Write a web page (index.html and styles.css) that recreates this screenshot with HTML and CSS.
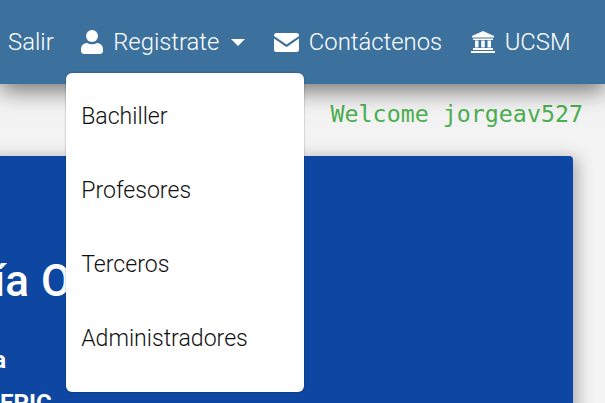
FILE: index.html
```html
<!DOCTYPE html>
<html lang="es">
<head>
    <meta charset="UTF-8">
    <meta name="viewport" content="width=device-width, initial-scale=1.0">
    <title>Secretaría Online</title>
    <link rel="stylesheet" href="styles.css">
</head>
<body>
    <nav class="navbar">
        <a class="nav-link" href="#">Salir</a>
        <div class="nav-item">
            <a class="nav-link" href="#">
                <svg class="icon icon-user" viewBox="0 0 24 26"><circle cx="12" cy="6.5" r="6.5"/><path d="M6.5 14.200c1.700.9 3.500 1.300 5.500 1.300s3.800-.4 5.500-1.300c3.700.2 6.500 3 6.500 6.700v2.300c0 1.500-1.300 2.800-2.800 2.800H2.800C1.300 26 0 24.700 0 23.200v-2.300c0-3.700 2.800-6.500 6.500-6.700z"/></svg>
                Registrate
                <span class="caret"></span>
            </a>
            <ul class="dropdown">
                <li><a href="#">Bachiller</a></li>
                <li><a href="#">Profesores</a></li>
                <li><a href="#">Terceros</a></li>
                <li><a href="#">Administradores</a></li>
            </ul>
        </div>
        <a class="nav-link" href="#">
            <svg class="icon icon-mail" viewBox="0 0 25 19"><path d="M2.300 0h20.400C24 0 25 1 25 2.300v.6l-12.500 8.500L0 2.900v-.6C0 1 1 0 2.300 0z"/><path d="M0 5.500l11.500 7.900c.6.400 1.400.4 2 0L25 5.500v11.200c0 1.300-1 2.300-2.300 2.300H2.300C1 19 0 18 0 16.700z"/></svg>
            Contáctenos
        </a>
        <a class="nav-link" href="#">
            <svg class="icon icon-bank" viewBox="0 0 24 22"><path d="M12 0l11 5v1.500H1V5z"/><path d="M2 7.500h20V9H2zM4 9.500h3.500v7H4zM10.200 9.500h3.600v7h-3.600zM16.500 9.500H20v7h-3.500zM2 17h20v2H2zM0 20h24v2H0z"/></svg>
            UCSM
        </a>
    </nav>

    <main class="content">
        <p class="welcome">Welcome jorgeav527</p>
        <section class="card">
            <h1 class="card-title">Secretaría Online</h1>
            <p class="card-line card-intro">Bienvenida</p>
            <p class="card-line">EPIC</p>
        </section>
    </main>
</body>
</html>
```

FILE: styles.css
```css
html, body {
    height: 100%;
    margin: 0;
    overflow: hidden;
}
body {
    font-family: Roboto, sans-serif;
    background-color: #f3f3f3;
}
.navbar {
    position: relative;
    z-index: 2;
    display: flex;
    align-items: center;
    gap: 28.5px;
    height: 84px;
    padding-left: 8px;
    background-color: #3c719e;
    box-shadow: 0 6px 22px rgba(0, 0, 0, 0.55);
    white-space: nowrap;
}
.nav-item {
    position: relative;
    margin-left: -1px;
}
.nav-link {
    display: flex;
    align-items: center;
    gap: 10px;
    color: white;
    font-size: 23.85px;
    font-weight: 300;
    text-decoration: none;
}
.icon {
    fill: white;
    flex: none;
}
.icon-user {
    width: 22px;
    height: 24px;
}
.icon-mail {
    width: 25px;
    height: 19px;
}
.icon-bank {
    width: 24px;
    height: 22px;
}
.caret {
    width: 0;
    height: 0;
    margin-left: 2px;
    border-top: 7px solid white;
    border-left: 7px solid transparent;
    border-right: 7px solid transparent;
}
.dropdown {
    position: absolute;
    top: 45px;
    left: -15px;
    width: 238px;
    margin: 0;
    padding: 7px 0 16px;
    list-style: none;
    background-color: white;
    border-radius: 6px;
    box-shadow: 0 0 2px rgba(0, 0, 0, 0.4);
}
.dropdown a {
    display: block;
    padding: 0 15px;
    color: #111;
    font-size: 23.1px;
    font-weight: 300;
    line-height: 74px;
    text-decoration: none;
}
.content {
    display: flex;
    flex-direction: column;
}
.welcome {
    margin: 15px 22px 0 0;
    color: #4caf50;
    font-family: "DejaVu Sans Mono", monospace;
    font-size: 23.3px;
    line-height: 30px;
    text-align: right;
}
.card {
    width: 593px;
    height: 300px;
    margin: 27px 0 0 -20px;
    padding: 100px 0 0 20px;
    box-sizing: border-box;
    background-color: #0d47a1;
    border-radius: 4px;
    box-shadow: 4px 2px 16px rgba(0, 0, 0, 0.3);
    color: white;
    white-space: nowrap;
}
.card-title {
    margin: 0 0 0 -172px;
    font-size: 44px;
    font-weight: 500;
    line-height: 50px;
    word-spacing: 1px;
}
.card-line {
    margin: 0;
    font-size: 24px;
    font-weight: 700;
    line-height: 43px;
}
.card-intro {
    margin: 33px 0 0 -113px;
}
```
